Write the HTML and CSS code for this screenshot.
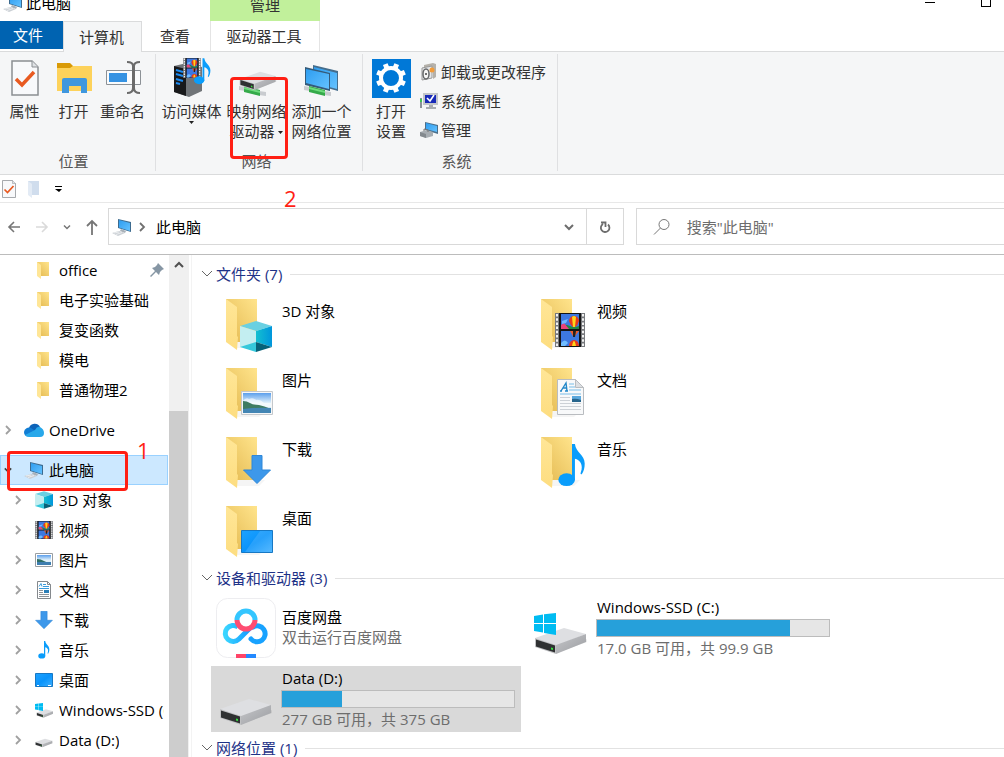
FILE: index.html
```
<!DOCTYPE html>
<html lang="zh-CN">
<head>
  <meta charset="UTF-8">
  <meta name="viewport" content="width=device-width, initial-scale=1.0">
  <title>此电脑</title>
  <link rel="stylesheet" href="styles.css">
</head>
<body>
  <!-- Shared icons -->
  <svg class="icon-defs" aria-hidden="true">
    <defs>
      <linearGradient id="gBack" x1="0" y1="1" x2="1" y2="0"><stop offset="0" stop-color="#e3b84f"/><stop offset="1" stop-color="#ffe48c"/></linearGradient>
      <linearGradient id="gFlap" x1="0" y1="0" x2="0" y2="1"><stop offset="0" stop-color="#ffe697"/><stop offset="1" stop-color="#fddd80"/></linearGradient>
      <linearGradient id="gScreen" x1="0" y1="0" x2="1" y2="1"><stop offset="0" stop-color="#2e9df0"/><stop offset="1" stop-color="#64c2ff"/></linearGradient>
      <linearGradient id="gDesk" x1="0" y1="0" x2="1" y2="1"><stop offset="0" stop-color="#1ea2ff"/><stop offset=".5" stop-color="#0a94fb"/><stop offset="1" stop-color="#3fb0ff"/></linearGradient>
      <linearGradient id="gSky" x1="0" y1="0" x2="0" y2="1"><stop offset="0" stop-color="#5b9fec"/><stop offset=".5" stop-color="#e2f2fb"/><stop offset="1" stop-color="#cfe6f5"/></linearGradient>
      <linearGradient id="gCube" x1="0" y1="0" x2="1" y2="0"><stop offset="0" stop-color="#14bfd0"/><stop offset="1" stop-color="#0096dc"/></linearGradient>
      <linearGradient id="gSide" x1="0" y1="0" x2="1" y2="1"><stop offset="0" stop-color="#c5c6c9"/><stop offset="1" stop-color="#9b9da1"/></linearGradient>
      <linearGradient id="gPan" x1="0" y1="0" x2="1" y2="0"><stop offset="0" stop-color="#3ad5ff"/><stop offset="1" stop-color="#149bff"/></linearGradient>
    </defs>

    <symbol id="folder" viewBox="0 0 48 53">
      <path d="M11 43h28l-6 6H11z" fill="#000" opacity=".04"/>
      <path d="M0 0h31v43H4L0 40z" fill="url(#gBack)"/>
      <path d="M0 0l11 8v29l1 1-1 13L0 43z" fill="url(#gFlap)"/>
    </symbol>
    <symbol id="folder-sm" viewBox="0 0 14 18">
      <path d="M1 1h12v14H1z" fill="url(#gBack)"/>
      <path d="M1 1l4 3v14l-4-3z" fill="#ffe697"/>
    </symbol>
    <symbol id="cube" viewBox="0 0 32 31">
      <path d="M0 5l16-5 16 5-16 5z" fill="#6ad0e2"/>
      <path d="M0 5l16 5v16L0 26z" fill="#c3eef1"/>
      <path d="M32 5l-16 5v11l16 5z" fill="url(#gCube)"/>
      <path d="M0 26l16-5v10z" fill="#35c8db"/>
      <path d="M32 26l-16-5v10z" fill="#066279"/>
    </symbol>
    <symbol id="film" viewBox="0 0 30 34">
      <path d="M0 0h30v34H0z" fill="#77797d"/>
      <path d="M4 0h22v34H4z" fill="#151515"/>
      <path d="M6 1h18v15H6zM6 18h18v15H6z" fill="#3d78e0"/>
      <path d="M6 12q5-1 9 1t9 0v3H6z" fill="#218a44"/>
      <path d="M6 12l3-2 5 6H6z" fill="#e8437a"/>
      <path d="M7 8l6-2-2 4-4 1z" fill="#6eb8ff"/>
      <path d="M14 8a5 5 0 0 1 10 0q-1 4-4 6h-2q-3-2-4-6z" fill="#e83b1c"/>
      <path d="M17 4q2-2 4 0l-1 10h-2z" fill="#ffd51b"/>
      <path d="M15 18h9l-4 5h-2z" fill="#ef5b28"/><path d="M18 18h3l-1 6h-2z" fill="#222"/>
      <path d="M14 33a5 6 0 0 1 10 0z" fill="#e83b1c"/><path d="M17 33q2-10 4 0z" fill="#ffd51b"/>
      <path d="M6 30q4-5 7 0l-3 3H6z" fill="#71bdff"/>
      <path d="M2 1v33M28 1v33" stroke="#f2f2f2" stroke-width="2" stroke-dasharray="2.500 1.700"/>
    </symbol>
    <symbol id="picture" viewBox="0 0 32 24">
      <path d="M.5.5h31v23H.5z" fill="#f6f7f8" stroke="#c4c8cc"/>
      <path d="M2 2h28v20H2z" fill="url(#gSky)"/>
      <path d="M2 10q3-4 6-2 4-2 7 1 4-1 8 3h7v4H2z" fill="#fff" opacity=".6"/>
      <path d="M2 10q4 0 7 2t9 2q5 1 12 4H2z" fill="#3f7c62"/>
      <path d="M2 18q14-2 28-1v5H2z" fill="#4486b4"/>
    </symbol>
    <symbol id="picture-sm" viewBox="0 0 18 18">
      <path d="M.5 2.500h17v13H.5z" fill="#fff" stroke="#9a9ea2"/>
      <path d="M2 4h14v10H2z" fill="url(#gSky)"/>
      <path d="M2 8q4 0 7 2t7 2H2z" fill="#2f6f66"/><path d="M2 11h14v3H2z" fill="#3f7eb0"/>
    </symbol>
    <symbol id="document" viewBox="0 0 28 36">
      <path d="M.5.5h18l8 8v27H.5z" fill="#f8f9fa" stroke="#b9bcc0"/>
      <path d="M18.500.5v8h8z" fill="#dcdfe2" stroke="#b9bcc0"/>
      <path d="M3 12h2M8 12h3M4 12l5-8 1 8M6 9h4" fill="none" stroke="#2288c9" stroke-width="1.400"/>
      <path d="M12 5h5M12 8h6M12 11h12M3 15h21" stroke="#79bde8"/>
      <path d="M3 18.500h10M3 21.500h10M3 24.500h21M3 27.500h21M3 30.500h21" stroke="#cdd1d6"/>
      <path d="M15 17h9v6h-9z" fill="#5ba8dc"/><path d="M15 20q4-1 9 1v2h-9z" fill="#27658c"/>
    </symbol>
    <symbol id="document-sm" viewBox="0 0 18 18">
      <path d="M2.500.5h10l3 3v14h-13z" fill="#fff" stroke="#85898d"/>
      <path d="M12.500.5v3h3" fill="none" stroke="#85898d"/>
      <path d="M4 5.500l2-3 1 3M8 3.500h3M8 5.500h6M4 7.500h10" fill="none" stroke="#3a9bdc"/>
      <path d="M4 9.500h4M4 11.500h4M4 13.500h10M4 15.500h10" stroke="#8f9499"/>
      <path d="M9 9h5v3H9z" fill="#2b7fb8"/>
    </symbol>
    <symbol id="download" viewBox="0 0 28 29">
      <path d="M9 .5h10V15h8.500L14 28.500.5 15H9z" fill="#3d98ea" stroke="#2f87d8"/>
    </symbol>
    <symbol id="note" viewBox="0 0 28 44">
      <ellipse cx="8.500" cy="36.500" rx="8.500" ry="6.500" fill="#0a9dfb"/>
      <path d="M14 0h3c1 9 10 11 10 20 0 5-1 8-3 11-2 0-1-1-1-2 3-8-1-13-6-14v22h-3z" fill="#0a9dfb"/>
    </symbol>
    <symbol id="desktop" viewBox="0 0 32 23">
      <path d="M.5.5h31v22H.5z" fill="url(#gDesk)" stroke="#1778c4"/>
      <path d="M19 1h12v21H4z" fill="#fff" opacity=".12"/>
    </symbol>
    <symbol id="desktop-sm" viewBox="0 0 18 18">
      <path d="M.5 2.500h17v13H.5z" fill="url(#gDesk)" stroke="#1778c4"/>
      <path d="M2 14.500h2M13 14.500h3" stroke="#fff"/>
    </symbol>
    <symbol id="pc" viewBox="0 0 20 18">
      <path d="M6 1l13 3v10L6 10z" fill="#3d6b8f"/>
      <path d="M7 2l11 3v8L7 9.500z" fill="url(#gScreen)"/>
      <path d="M9 11l5 2-1 2-5-2z" fill="#a9b1b8"/>
      <path d="M0 15l7-2 6 2-7 3z" fill="#cbd0d5"/>
      <path d="M2 15l5-1M4 16.500l6-2" stroke="#fff" stroke-width=".6"/>
    </symbol>
    <symbol id="drive" viewBox="0 0 54 28">
      <path d="M20 27l33-12v-3L24 24z" fill="#000" opacity=".08"/>
      <path d="M1 11L30 1l22 6-30 12z" fill="#dedfe2"/>
      <path d="M22 18l30-11v8L22 27z" fill="url(#gSide)"/>
      <path d="M1 11l21 7v9L1 20z" fill="#c0c1c3"/>
      <path d="M2 12.500l19 6v7L2 19.500z" fill="#2f3132"/>
      <path d="M17 20.500l2 .6v2l-2-.6z" fill="#35e23f"/>
    </symbol>
    <symbol id="winlogo" viewBox="0 0 22 22">
      <path d="M0 3l9-1.500V10H0zM10 1.300L22 0v10H10zM0 11h9v8.500L0 18zM10 11h12v11l-12-2z" fill="#00bcf2"/>
    </symbol>
    <symbol id="cloud" viewBox="0 0 20 14">
      <path d="M5 5a6 6 0 0 1 11-1l-3 6H3z" fill="#0d63b8"/>
      <path d="M0 9a5 5 0 0 1 7-4l6 4-9 4.500Q0 13 0 9z" fill="#117dd4"/>
      <path d="M11 7q2-4 5-3 4 2 4 6 0 4-4 4H5q-3 0-4-2z" fill="#28a8ea"/>
    </symbol>
    <symbol id="sheet-check" viewBox="0 0 28 36">
      <path d="M1 1h20l6 6v28H1z" fill="#f8f9fb" stroke="#8b8f93" stroke-width="1.500"/>
      <path d="M21 1v6h6" fill="#dfe2e5" stroke="#8b8f93"/>
      <path d="M5 19l6 6L23 12" fill="none" stroke="#e85a21" stroke-width="3.500"/>
    </symbol>
    <symbol id="chev-right" viewBox="0 0 8 10"><path d="M2 1l4 4-4 4" fill="none" stroke="currentColor" stroke-width="1.800"/></symbol>
    <symbol id="chev-down" viewBox="0 0 10 8"><path d="M1 2l4 4 4-4" fill="none" stroke="currentColor" stroke-width="2"/></symbol>
    <symbol id="chev-thin" viewBox="0 0 12 8"><path d="M1 1l5 5 5-5" fill="none" stroke="currentColor"/></symbol>
    <symbol id="triangle" viewBox="0 0 5 3"><path d="M0 0h5L2.500 3z" fill="currentColor"/></symbol>
    <symbol id="cable" viewBox="0 0 28 12">
      <path d="M0 1l6 1v4L0 5zM20 6l7 1v4l-7-1z" fill="#c9ccd0"/>
      <path d="M5 1l16 4v6L5 7z" fill="#35aa4a"/><path d="M5 2l16 4v2L5 4z" fill="#6edc7d"/>
    </symbol>
  </svg>

  <div class="window">
    <header class="titlebar">
      <div class="window-title">
        <svg class="icon-20"><use href="#pc"/></svg>
        <span>此电脑</span>
      </div>
      <div class="context-title">管理</div>
      <div class="window-controls">
        <button class="control minimize" aria-label="最小化"></button>
        <button class="control maximize" aria-label="最大化"></button>
      </div>
    </header>

    <nav class="tabs">
      <button class="tab tab-file">文件</button>
      <button class="tab tab-active">计算机</button>
      <button class="tab tab-view">查看</button>
      <button class="tab tab-tools">驱动器工具</button>
    </nav>

    <div class="ribbon">
      <section class="group group-location">
        <div class="group-items">
          <button class="big-btn narrow">
            <svg class="big-icon" viewBox="0 0 40 40"><use href="#sheet-check" x="6" y="2" width="28" height="36"/></svg>
            <span>属性</span>
          </button>
          <button class="big-btn narrow">
            <svg class="big-icon" viewBox="0 0 40 40">
              <path d="M3 5h13l3 3v4H3z" fill="#d99a06"/><path d="M3 10h13l3-2h19v25H3z" fill="#fdd25b"/>
              <path d="M8 35V22q0-2 2-2h21q2 0 2 2v13h-6v-7H15v7z" fill="#3f97de"/>
            </svg>
            <span>打开</span>
          </button>
          <button class="big-btn narrow">
            <svg class="big-icon" viewBox="0 0 40 40">
              <path d="M3.500 12.500h34v14h-34z" fill="#fafbfc" stroke="#8c9196"/>
              <path d="M6 15h18v9H6z" fill="#3592e2"/>
              <path d="M24 4q6 0 6 4v22q0 5-6 5M37 4q-6 0-6 4v22q0 5 6 5" fill="none" stroke="#6b6b6b" stroke-width="2"/>
            </svg>
            <span>重命名</span>
          </button>
        </div>
        <h2 class="group-label">位置</h2>
      </section>

      <section class="group group-network">
        <div class="group-items">
          <button class="big-btn">
            <svg class="big-icon" viewBox="0 0 40 40">
              <path d="M2 8l13-3 15 4v24l-13 6L2 34z" fill="#707478"/>
              <path d="M2 8l12 3v27L2 34z" fill="#18191b"/>
              <path d="M4 12l7 2M4 16l7 2M4 21l7 2M4 25l4 1" stroke="#1c8cf3" stroke-width="2"/>
              <use href="#film" x="11" y="0" width="18" height="20"/>
              <use href="#note" x="22" y="0" width="17" height="27"/>
            </svg>
            <span>访问媒体</span>
            <svg class="drop-arrow"><use href="#triangle"/></svg>
          </button>
          <button class="big-btn">
            <svg class="big-icon" viewBox="0 0 40 40">
              <use href="#cable" x="2" y="27" width="28" height="12"/>
              <use href="#drive" x="2" y="13" width="38" height="20"/>
            </svg>
            <span>映射网络<br>驱动器 <svg class="drop-arrow inline-arrow"><use href="#triangle"/></svg></span>
          </button>
          <button class="big-btn">
            <svg class="big-icon" viewBox="0 0 40 40">
              <path d="M11 7l25 6v20l-25-7z" fill="#456d8c"/><path d="M12 9l23 6v16l-23-6z" fill="url(#gScreen)"/>
              <path d="M3 9l25 6v18L3 27z" fill="#355b7a"/><path d="M4 11l23 5v15L4 25z" fill="url(#gScreen)"/>
              <use href="#cable" x="2" y="27" width="28" height="12"/>
            </svg>
            <span>添加一个<br>网络位置</span>
          </button>
        </div>
        <h2 class="group-label">网络</h2>
      </section>

      <section class="group group-system">
        <div class="group-items">
          <button class="big-btn settings-btn">
            <svg class="big-icon" viewBox="0 0 40 40">
              <path d="M1 1h39v39H1z" fill="#0078d7"/>
              <circle cx="20" cy="20" r="10" fill="none" stroke="#fff" stroke-width="4"/>
              <g stroke="#fff" stroke-width="5">
                <path d="M20 5v5M20 30v5M5 20h5M30 20h5" transform="rotate(22.500 20 20)"/>
                <path d="M20 5v5M20 30v5M5 20h5M30 20h5" transform="rotate(67.500 20 20)"/>
              </g>
            </svg>
            <span>打开<br>设置</span>
          </button>
          <div class="small-list">
            <button class="small-btn">
              <svg class="icon-18" viewBox="0 0 18 18">
                <path d="M4 2l9-2 3 1v13l-3 2V5L4 4z" fill="#b5b1aa"/><path d="M2 5l10-2v12l-10 2z" fill="#e5e7e9" stroke="#999"/>
                <ellipse cx="6" cy="11" rx="3" ry="5" fill="#f6f6f6" stroke="#66686a" stroke-width="1.500"/><circle cx="6" cy="11" r="1" fill="#444"/>
                <circle cx="12" cy="7" r="2.500" fill="#f29b38"/>
              </svg>
              <span>卸载或更改程序</span>
            </button>
            <button class="small-btn">
              <svg class="icon-18" viewBox="0 0 18 18">
                <path d="M0 6h2v10H0z" fill="#8a9298"/><path d="M0 7h2v3H0z" fill="#41c455"/>
                <path d="M3 1h15v12H3z" fill="#c2c5c9"/><path d="M5 3h11v8H5z" fill="#1729b8"/>
                <path d="M7 6l3 3 4-6" fill="none" stroke="#fff" stroke-width="1.600"/><path d="M9 13h4v2h3v2H6v-2h3z" fill="#a8acb0"/>
              </svg>
              <span>系统属性</span>
            </button>
            <button class="small-btn">
              <svg class="icon-18" viewBox="0 0 18 18">
                <path d="M5 1l13 3v9L5 9z" fill="#4b6f8b"/><path d="M6 2l11 3v6L6 8z" fill="url(#gScreen)"/>
                <path d="M0 11l7-2 6 2v4l-7 2-6-2z" fill="#a7adb2"/><path d="M0 11l6 2v4l-6-2z" fill="#83898e"/><path d="M4 10V8l4 1v2" fill="none" stroke="#777"/>
              </svg>
              <span>管理</span>
            </button>
          </div>
        </div>
        <h2 class="group-label">系统</h2>
      </section>
    </div>

    <div class="quick-bar">
      <button class="plain-btn" aria-label="属性"><svg class="quick-icon"><use href="#sheet-check"/></svg></button>
      <button class="plain-btn" aria-label="新建文件夹">
        <svg class="quick-icon" viewBox="0 0 16 18"><path d="M2 1h11v14H2z" fill="#d0dded"/><path d="M2 1l4 3v14l-4-3z" fill="#e3ebf5"/></svg>
      </button>
      <button class="plain-btn" aria-label="自定义快速访问工具栏">
        <svg class="quick-icon" viewBox="0 0 16 18"><path d="M4 6h7v1H4zM4 9h7l-3 3z" fill="#000"/></svg>
      </button>
    </div>

    <div class="address-row">
      <div class="history">
        <button class="plain-btn" aria-label="后退"><svg class="arrow" viewBox="0 0 14 14"><path d="M13 7H2M7 2L2 7l5 5" fill="none" stroke="#767676" stroke-width="1.600"/></svg></button>
        <button class="plain-btn" aria-label="前进"><svg class="arrow" viewBox="0 0 14 14"><path d="M1 7h11M7 2l5 5-5 5" fill="none" stroke="#dadada" stroke-width="1.600"/></svg></button>
        <button class="plain-btn" aria-label="最近的位置"><svg class="tiny-arrow"><use href="#chev-down"/></svg></button>
        <button class="plain-btn" aria-label="上移"><svg class="up-arrow" viewBox="0 0 14 16"><path d="M7 16V2M2 7l5-5 5 5" fill="none" stroke="#767676" stroke-width="1.800"/></svg></button>
      </div>
      <div class="address-box">
        <svg class="icon-20"><use href="#pc"/></svg>
        <svg class="crumb-arrow"><use href="#chev-right"/></svg>
        <a class="crumb" href="#">此电脑</a>
        <button class="plain-btn address-drop" aria-label="展开"><svg class="drop-chev"><use href="#chev-down"/></svg></button>
        <button class="refresh" aria-label="刷新">
          <svg class="refresh-icon" viewBox="0 0 14 14"><path d="M10 4.500A4.300 4.300 0 1 1 5 4M3 2.500h4.500V7" fill="none" stroke="#6d6d6d" stroke-width="1.800"/></svg>
        </button>
      </div>
      <div class="search-box">
        <svg class="search-icon" viewBox="0 0 18 18"><circle cx="11" cy="6.500" r="5" fill="none" stroke="#777"/><path d="M7.500 10L1 16.500" stroke="#777"/></svg>
        <input class="search-input" type="text" placeholder='搜索"此电脑"' aria-label="搜索此电脑">
      </div>
    </div>

    <div class="body">
      <nav class="sidebar">
        <ul class="tree quick">
          <li><a class="node" href="#"><svg class="node-folder"><use href="#folder-sm"/></svg><span>office</span>
            <svg class="pin" viewBox="0 0 14 14"><path d="M8 0l6 6-2 1-2 2-1 3-3-3-5 5-1-1 5-5-3-3 3-1 2-2z" fill="#8696a4"/></svg></a></li>
          <li><a class="node" href="#"><svg class="node-folder"><use href="#folder-sm"/></svg><span>电子实验基础</span></a></li>
          <li><a class="node" href="#"><svg class="node-folder"><use href="#folder-sm"/></svg><span>复变函数</span></a></li>
          <li><a class="node" href="#"><svg class="node-folder"><use href="#folder-sm"/></svg><span>模电</span></a></li>
          <li><a class="node" href="#"><svg class="node-folder"><use href="#folder-sm"/></svg><span>普通物理2</span></a></li>
        </ul>
        <ul class="tree">
          <li><a class="node root" href="#"><svg class="twist"><use href="#chev-right"/></svg><svg class="icon-20"><use href="#cloud"/></svg><span>OneDrive</span></a></li>
        </ul>
        <ul class="tree">
          <li><a class="node root selected" href="#"><svg class="twist open"><use href="#chev-down"/></svg><svg class="icon-20"><use href="#pc"/></svg><span>此电脑</span></a></li>
          <li><a class="node child" href="#"><svg class="twist"><use href="#chev-right"/></svg><svg class="icon-18"><use href="#cube"/></svg><span>3D 对象</span></a></li>
          <li><a class="node child" href="#"><svg class="twist"><use href="#chev-right"/></svg><svg class="icon-18" viewBox="0 0 30 34" preserveAspectRatio="none"><use href="#film" width="30" height="34"/></svg><span>视频</span></a></li>
          <li><a class="node child" href="#"><svg class="twist"><use href="#chev-right"/></svg><svg class="icon-18"><use href="#picture-sm"/></svg><span>图片</span></a></li>
          <li><a class="node child" href="#"><svg class="twist"><use href="#chev-right"/></svg><svg class="icon-18"><use href="#document-sm"/></svg><span>文档</span></a></li>
          <li><a class="node child" href="#"><svg class="twist"><use href="#chev-right"/></svg><svg class="icon-18"><use href="#download"/></svg><span>下载</span></a></li>
          <li><a class="node child" href="#"><svg class="twist"><use href="#chev-right"/></svg><svg class="icon-18"><use href="#note"/></svg><span>音乐</span></a></li>
          <li><a class="node child" href="#"><svg class="twist"><use href="#chev-right"/></svg><svg class="icon-18"><use href="#desktop-sm"/></svg><span>桌面</span></a></li>
          <li><a class="node child" href="#"><svg class="twist"><use href="#chev-right"/></svg><svg class="icon-18" viewBox="0 0 18 18"><use href="#drive" x="1" y="8" width="18" height="9"/><use href="#winlogo" width="8" height="8" y="2"/></svg><span>Windows-SSD (C:)</span></a></li>
          <li><a class="node child" href="#"><svg class="twist"><use href="#chev-right"/></svg><svg class="icon-18" viewBox="0 0 18 18"><use href="#drive" y="7" width="18" height="10"/></svg><span>Data (D:)</span></a></li>
        </ul>
      </nav>
      <div class="scrollbar">
        <button class="plain-btn scroll-up" aria-label="向上滚动"><svg class="scroll-chev" viewBox="0 0 10 8"><path d="M1 6l4-4 4 4" fill="none" stroke="#505050" stroke-width="2"/></svg></button>
        <div class="scroll-space"></div>
        <div class="scroll-thumb"></div>
      </div>

      <main class="content">
        <section>
          <h2 class="section-title"><svg class="section-chev"><use href="#chev-thin"/></svg>文件夹 (7)</h2>
          <div class="tiles folders">
            <a class="tile" href="#"><svg class="tile-icon" viewBox="0 0 60 54"><use href="#folder" x="10" width="48" height="53"/><use href="#cube" x="24" y="22" width="32" height="31"/></svg><span class="name">3D 对象</span></a>
            <a class="tile" href="#"><svg class="tile-icon" viewBox="0 0 60 54"><use href="#folder" x="10" width="48" height="53"/><use href="#film" x="24" y="14" width="30" height="34"/></svg><span class="name">视频</span></a>
            <a class="tile" href="#"><svg class="tile-icon" viewBox="0 0 60 54"><use href="#folder" x="10" width="48" height="53"/><use href="#picture" x="25" y="23" width="32" height="24"/></svg><span class="name">图片</span></a>
            <a class="tile" href="#"><svg class="tile-icon" viewBox="0 0 60 54"><use href="#folder" x="10" width="48" height="53"/><use href="#document" x="26" y="11" width="28" height="36"/></svg><span class="name">文档</span></a>
            <a class="tile" href="#"><svg class="tile-icon" viewBox="0 0 60 54"><use href="#folder" x="10" width="48" height="53"/><use href="#download" x="27" y="18" width="28" height="29"/></svg><span class="name">下载</span></a>
            <a class="tile" href="#"><svg class="tile-icon" viewBox="0 0 60 54"><use href="#folder" x="10" width="48" height="53"/><use href="#note" x="27" y="7" width="28" height="43"/></svg><span class="name">音乐</span></a>
            <a class="tile" href="#"><svg class="tile-icon" viewBox="0 0 60 54"><use href="#folder" x="10" width="48" height="53"/><use href="#desktop" x="25" y="24" width="32" height="23"/></svg><span class="name">桌面</span></a>
          </div>
        </section>

        <section>
          <h2 class="section-title"><svg class="section-chev"><use href="#chev-thin"/></svg>设备和驱动器 (3)</h2>
          <div class="tiles drives">
            <a class="tile" href="#">
              <svg class="drive-icon" viewBox="0 0 60 60">
                <rect x=".5" y=".5" width="59" height="59" rx="11" fill="#fff" stroke="#ededf0"/>
                <g fill="none" stroke-width="5">
                  <path d="M39 22a9 9 0 1 0-18 0" stroke="#34c6ff"/>
                  <path d="M37 29a8 8 0 1 1-2 12" stroke="#18a2ff" stroke-linecap="round"/>
                  <path d="M34 30L23 41a8 8 0 1 1-1-12" stroke="url(#gPan)"/>
                  <path d="M21 22a9 9 0 1 0 18 0" stroke="#ff4d72"/>
                </g>
                <path d="M20 56h10v4H20z" fill="#ff4468"/><path d="M30 56h10v4H30z" fill="#2389ff"/>
              </svg>
              <span class="info centered"><span class="name">百度网盘</span><span class="detail">双击运行百度网盘</span></span>
            </a>
            <a class="tile" href="#">
              <svg class="drive-icon" viewBox="0 0 60 60"><use href="#drive" x="3" y="29" width="54" height="28"/><use href="#winlogo" x="3" y="15" width="22" height="22"/></svg>
              <span class="info"><span class="name">Windows-SSD (C:)</span>
                <span class="bar"><span class="bar-fill" style="width: 83%"></span></span>
                <span class="detail">17.0 GB 可用，共 99.9 GB</span></span>
            </a>
            <a class="tile tile-selected" href="#">
              <svg class="drive-icon" viewBox="0 0 60 60"><use href="#drive" x="3" y="29" width="54" height="28"/></svg>
              <span class="info"><span class="name">Data (D:)</span>
                <span class="bar"><span class="bar-fill" style="width: 26%"></span></span>
                <span class="detail">277 GB 可用，共 375 GB</span></span>
            </a>
          </div>
        </section>

        <section>
          <h2 class="section-title"><svg class="section-chev"><use href="#chev-thin"/></svg>网络位置 (1)</h2>
        </section>
      </main>
    </div>

    <!-- Step marks over the window -->
    <div class="mark mark-one"></div>
    <span class="mark-number number-one">1</span>
    <div class="mark mark-two"></div>
    <span class="mark-number number-two">2</span>
  </div>
</body>
</html>
```

FILE: styles.css
```
/* General Reset */
* {
  box-sizing: border-box;
}

body {
  margin: 0;
  font-family: "Open Sans", "Noto Sans CJK SC", sans-serif;
  font-size: 15px;
  line-height: 20px;
  color: #000;
  background-color: #fff;
}

button {
  margin: 0;
  padding: 0;
  border: 0;
  background: none;
  font: inherit;
  color: inherit;
}

a {
  color: inherit;
  text-decoration: none;
}

h2 {
  margin: 0;
  font-size: 15px;
  font-weight: 400;
}

ul {
  margin: 0;
  padding: 0;
  list-style: none;
}

svg {
  display: block;
  flex: none;
}

.icon-defs {
  position: absolute;
  width: 0;
  height: 0;
}

.icon-18 {
  width: 18px;
  height: 18px;
}

.icon-20 {
  width: 20px;
  height: 18px;
}

.window {
  position: relative;
  display: flex;
  flex-direction: column;
  height: 100vh;
  overflow: hidden;
}

/* Title bar, its upper part is off screen */
.titlebar {
  display: flex;
  flex: none;
  height: 36px;
  margin-top: -15px;
}

.window-title {
  display: flex;
  align-items: center;
  gap: 3px;
  width: 210px;
  padding-left: 3px;
}

.context-title {
  width: 110px;
  padding-top: 10px;
  background-color: #c1f09b;
  text-align: center;
  color: #333;
}

.window-controls {
  display: flex;
  gap: 46px;
  margin-left: auto;
  padding: 12px 13px 0 0;
}

.control {
  width: 10px;
  height: 10px;
}

.minimize {
  height: 6px;
  border-bottom: 1px solid #000;
}

.maximize {
  border: 1px solid #000;
}

/* Tabs */
.tabs {
  display: flex;
  flex: none;
  height: 31px;
  border-bottom: 1px solid #dadbdc;
}

.tab {
  height: 30px;
  padding-right: 2px;
  color: #333;
}

.tab-file {
  width: 63px;
  height: 28px;
  padding-right: 7px;
  background-color: #0063b1;
  color: #fff;
}

.tab-active {
  width: 79px;
  height: 31px;
  border: 1px solid #dadbdc;
  border-bottom: 0;
  background-color: #f5f6f7;
}

.tab-view {
  width: 68px;
}

.tab-tools {
  width: 110px;
  border-left: 1px solid #e4e4e4;
  border-right: 1px solid #e4e4e4;
}

/* Ribbon */
.ribbon {
  display: flex;
  flex: none;
  height: 123px;
  padding: 2px 0 3px;
  background-color: #f5f6f7;
  border-bottom: 1px solid #dadbdc;
  color: #333;
}

.group {
  display: flex;
  flex-direction: column;
  border-right: 1px solid #dfe0e2;
}

.group-items {
  display: flex;
  flex: 1;
  padding-top: 4px;
}

.group-location {
  padding-right: 8px;
}

.group-network {
  padding: 0 8px 0 3px;
}

.group-system {
  padding: 0 11px 0 4px;
}

.group-label {
  line-height: 20px;
  text-align: center;
  color: #555;
}

.big-btn {
  display: flex;
  flex-direction: column;
  align-items: center;
  width: 65px;
  white-space: nowrap;
}

.narrow {
  width: 49px;
}

.settings-btn {
  width: 48px;
}

.big-icon {
  width: 40px;
  height: 40px;
  margin-bottom: 3px;
}

.drop-arrow {
  width: 5px;
  height: 3px;
  color: #222;
}

.inline-arrow {
  display: inline-block;
  vertical-align: middle;
}

.small-list {
  display: flex;
  flex-direction: column;
  padding-left: 5px;
}

.small-btn {
  display: flex;
  align-items: center;
  gap: 3px;
  height: 29px;
  padding-bottom: 2px;
}

/* Quick access bar */
.quick-bar {
  display: flex;
  flex: none;
  align-items: center;
  gap: 9px;
  height: 28px;
  padding-left: 1px;
  border-bottom: 1px solid #e8e8e8;
}

.quick-icon {
  width: 16px;
  height: 18px;
}

/* Address row */
.address-row {
  display: grid;
  grid-template-columns: 108px minmax(0, 7fr) 12px minmax(0, 5fr);
  flex: none;
  padding: 5px 0 9px;
  border-bottom: 1px solid #bcbcbc;
}

.history {
  display: flex;
  align-items: center;
  gap: 14px;
  padding-left: 7px;
}

.arrow {
  width: 14px;
  height: 14px;
}

.tiny-arrow {
  width: 8px;
  height: 6px;
  color: #767676;
}

.up-arrow {
  width: 14px;
  height: 16px;
}

.address-box {
  display: flex;
  align-items: center;
  height: 37px;
  padding-left: 3px;
  border: 1px solid #d9d9d9;
}

.crumb-arrow {
  width: 8px;
  height: 10px;
  margin: 0 10px 0 6px;
  color: #707070;
}

.address-drop {
  margin-left: auto;
  padding: 0 12px;
}

.drop-chev {
  width: 10px;
  height: 8px;
  color: #6d6d6d;
}

.refresh {
  display: flex;
  align-items: center;
  justify-content: center;
  align-self: stretch;
  width: 37px;
  border-left: 1px solid #d9d9d9;
}

.refresh-icon {
  width: 14px;
  height: 14px;
}

.search-box {
  display: flex;
  grid-column: 4;
  align-items: center;
  gap: 16px;
  padding-left: 16px;
  border: 1px solid #d9d9d9;
  border-right: 0;
}

.search-icon {
  width: 18px;
  height: 18px;
}

.search-input {
  flex: 1;
  min-width: 0;
  padding: 0;
  border: 0;
  outline: 0;
  font: inherit;
}

.search-input::placeholder {
  color: #6d6d6d;
  opacity: 1;
}

/* Body */
.body {
  display: flex;
  flex: 1;
  min-height: 0;
}

.sidebar {
  width: 169px;
  overflow: hidden;
}

.tree {
  margin-bottom: 10px;
}

.node {
  display: flex;
  align-items: center;
  height: 30px;
  margin-right: 1px;
  white-space: nowrap;
}

.quick .node {
  gap: 9px;
  padding-left: 36px;
}

.node-folder {
  width: 14px;
  height: 18px;
}

.pin {
  width: 14px;
  height: 14px;
  margin: 0 4px 0 auto;
}

.root {
  gap: 5px;
  padding-left: 4px;
}

.root .twist {
  margin-right: 7px;
}

.child {
  gap: 6px;
  padding: 0 4px 0 14px;
}

.child .twist {
  margin-right: 7px;
}

.child span {
  overflow: hidden;
}

.twist {
  width: 8px;
  height: 10px;
  color: #a0a0a0;
}

.twist.open {
  color: #404040;
}

.selected {
  background-color: #cce8ff;
  box-shadow: inset 0 0 0 1px #99d1ff;
}

/* Scrollbar */
.scrollbar {
  display: flex;
  flex-direction: column;
  flex: none;
  width: 20px;
  background-color: #f0f0f0;
}

.scroll-up {
  display: flex;
  align-items: center;
  justify-content: center;
  height: 20px;
}

.scroll-chev {
  width: 10px;
  height: 8px;
}

.scroll-space {
  flex: 136;
}

.scroll-thumb {
  flex: 346;
  margin-right: 1px;
  background-color: #cdcdcd;
}

/* Content */
.content {
  flex: 1;
  min-width: 0;
  margin-left: 2px;
  padding: 7px 0 0 9px;
  border-left: 1px solid #f3f3f3;
  overflow: hidden;
}

.section-title {
  display: flex;
  align-items: center;
  height: 24px;
  color: #1e3287;
}

/* Rule that runs to the window edge */
.section-title::after {
  content: "";
  flex: 1;
  height: 1px;
  margin-left: 8px;
  background-color: #e2e2e2;
}

.section-chev {
  width: 12px;
  height: 8px;
  margin-right: 3px;
  color: #666;
}

.tiles {
  display: grid;
  grid-template-columns: repeat(auto-fill, 310px);
  gap: 5px;
  padding-left: 10px;
}

.folders {
  padding-top: 8px;
  padding-bottom: 1px;
}

.drives {
  padding-top: 5px;
  padding-bottom: 4px;
}

.tile {
  display: flex;
  gap: 5px;
  padding-left: 5px;
}

.folders .tile {
  height: 64px;
  padding-top: 5px;
}

.drives .tile {
  height: 66px;
  padding-top: 2px;
}

.tile-selected {
  background-color: #d9d9d9;
}

.tile-icon {
  width: 60px;
  height: 54px;
}

.name,
.detail {
  padding-left: 1px;
}

.folders .name {
  padding-top: 2px;
}

.drive-icon {
  width: 60px;
  height: 60px;
  margin-top: 1px;
}

.info {
  display: flex;
  flex-direction: column;
  width: 234px;
}

.centered {
  padding-top: 10px;
}

.bar {
  height: 18px;
  margin: 2px 0 1px;
  border: 1px solid #bcbcbc;
  background-color: #e6e6e6;
}

.bar-fill {
  display: block;
  height: 100%;
  background-color: #26a0da;
}

.detail {
  color: #6d6d6d;
}

/* Step marks */
.mark {
  position: absolute;
  border: 3px solid #ff1f14;
  border-radius: 4px;
}

.mark-one {
  top: 451px;
  left: 7px;
  width: 121px;
  height: 40px;
}

.mark-two {
  top: 77px;
  left: 230px;
  width: 58px;
  height: 82px;
}

.mark-number {
  position: absolute;
  font-size: 22px;
  color: #ff1f14;
}

.number-one {
  top: 440px;
  left: 137px;
}

.number-two {
  top: 188px;
  left: 284px;
}
```
